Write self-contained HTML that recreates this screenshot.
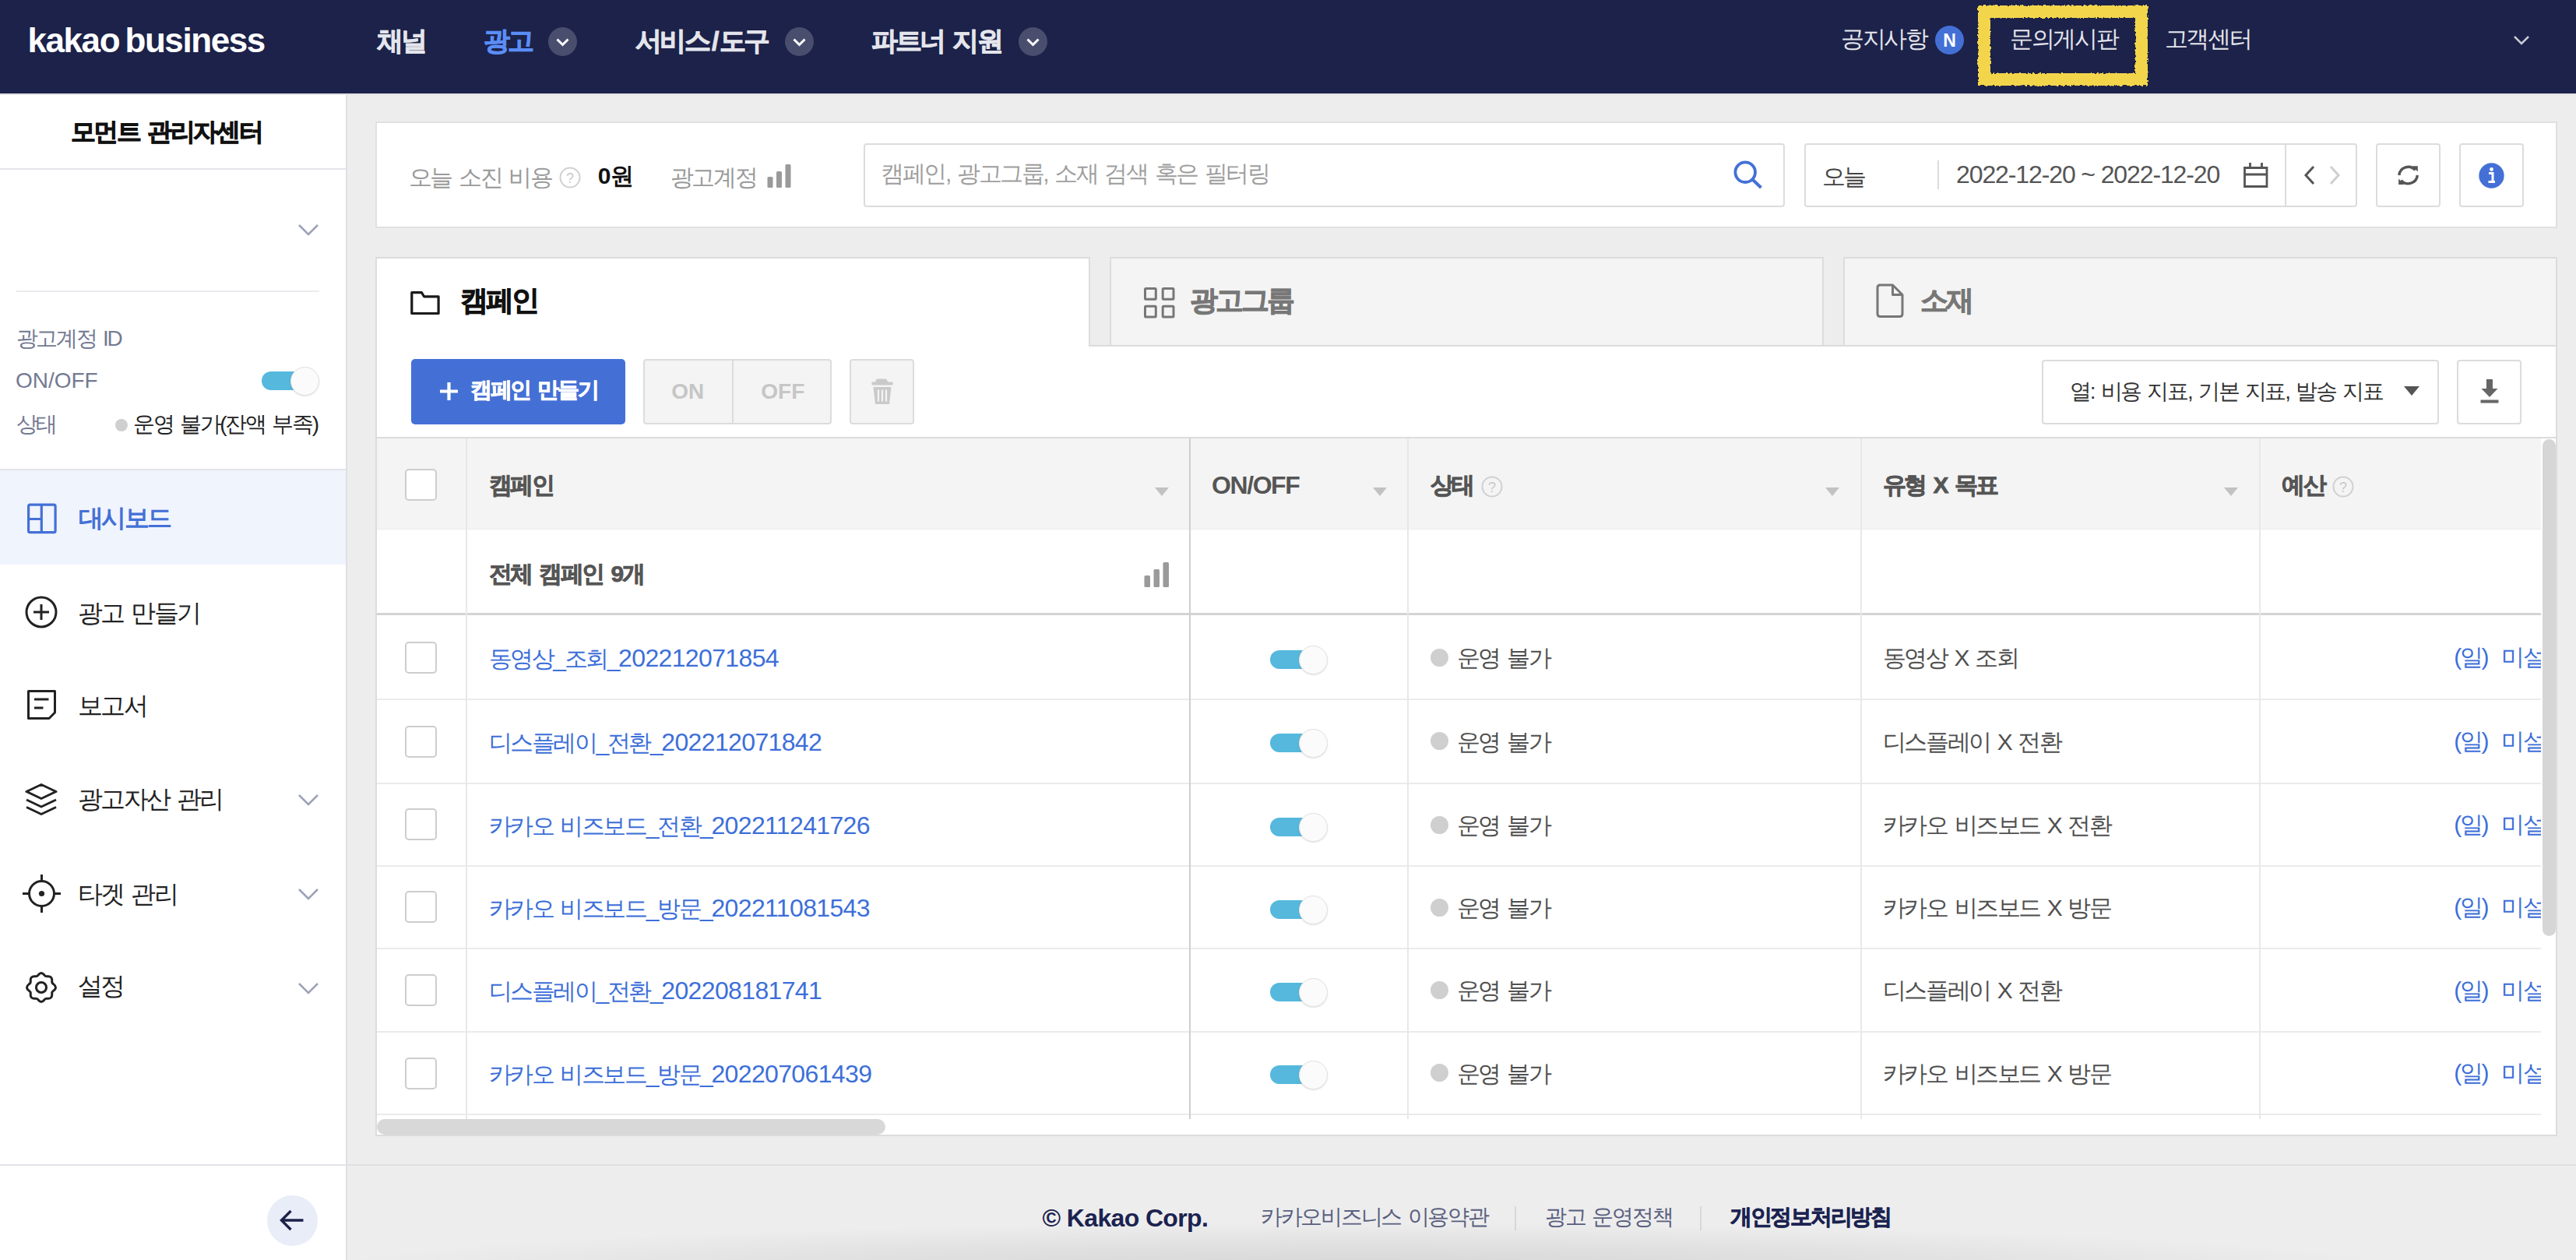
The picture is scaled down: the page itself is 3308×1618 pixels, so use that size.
<!DOCTYPE html>
<html><head><meta charset="utf-8"><title>kakao business</title>
<style>
html,body{margin:0;padding:0;}
body{width:3308px;height:1618px;overflow:hidden;position:relative;background:#ededed;font-family:'Liberation Sans', sans-serif;}
body > div, body div{position:absolute;}
.t{white-space:nowrap;}
</style></head><body>
<div style="left:0px;top:0px;width:3308px;height:120px;background:#1c2249"></div>
<div style="left:0px;top:120px;width:444px;height:1498px;background:#fff"></div>
<div style="left:0px;top:120px;width:3308px;height:2px;background:#e2e2e6"></div>
<div style="left:444px;top:120px;width:2px;height:1498px;background:#dfe0e6"></div>
<div class="t" style="left:35.4px;top:29.7px;font-size:44px;line-height:44px;color:#ffffff;font-weight:700;letter-spacing:-0.032em;word-spacing:0.12em;word-spacing:-0.08em">kakao business</div>
<div class="t" style="left:483.6px;top:35.1px;font-size:34px;line-height:34px;color:#e4e5ec;font-weight:700;letter-spacing:-0.08em;word-spacing:0.12em;-webkit-text-stroke:0.85px #e4e5ec;">채널</div>
<div class="t" style="left:621.1px;top:35.1px;font-size:34px;line-height:34px;color:#5b8df6;font-weight:700;letter-spacing:-0.08em;word-spacing:0.12em;-webkit-text-stroke:0.85px #5b8df6;">광고</div>
<svg style="position:absolute;left:704px;top:35px;" width="37" height="37" viewBox="0 0 37 37"><circle cx="18.5" cy="18.5" r="18.5" fill="#4a4e6e"/><path d="M11.5 15.5 L18.5 22.5 L25.5 15.5" fill="none" stroke="#fff" stroke-width="3"/></svg>
<div class="t" style="left:816.1px;top:35.1px;font-size:34px;line-height:34px;color:#e4e5ec;font-weight:700;letter-spacing:-0.08em;word-spacing:0.12em;-webkit-text-stroke:0.85px #e4e5ec;">서비스<span style="letter-spacing:0.02em;margin-left:0.12em">/</span>도구</div>
<svg style="position:absolute;left:1007.5px;top:35px;" width="37" height="37" viewBox="0 0 37 37"><circle cx="18.5" cy="18.5" r="18.5" fill="#4a4e6e"/><path d="M11.5 15.5 L18.5 22.5 L25.5 15.5" fill="none" stroke="#fff" stroke-width="3"/></svg>
<div class="t" style="left:1118.6px;top:35.1px;font-size:34px;line-height:34px;color:#e4e5ec;font-weight:700;letter-spacing:-0.08em;word-spacing:0.12em;-webkit-text-stroke:0.85px #e4e5ec;">파트너 지원</div>
<svg style="position:absolute;left:1308px;top:35px;" width="37" height="37" viewBox="0 0 37 37"><circle cx="18.5" cy="18.5" r="18.5" fill="#4a4e6e"/><path d="M11.5 15.5 L18.5 22.5 L25.5 15.5" fill="none" stroke="#fff" stroke-width="3"/></svg>
<div class="t" style="left:2364.3px;top:35.4px;font-size:30px;line-height:30px;color:#e4e5ec;font-weight:400;letter-spacing:-0.08em;word-spacing:0.1em;">공지사항</div>
<svg style="position:absolute;left:2484.5px;top:32.5px;" width="37" height="37" viewBox="0 0 37 37"><circle cx="18.5" cy="18.5" r="18.5" fill="#4470d6"/><text x="18.5" y="26.5" text-anchor="middle" font-family="Liberation Sans" font-weight="700" font-size="23" fill="#fff">N</text></svg>
<div class="t" style="left:2581.3px;top:35.4px;font-size:30px;line-height:30px;color:#e4e5ec;font-weight:400;letter-spacing:-0.08em;word-spacing:0.1em;">문의게시판</div>
<div class="t" style="left:2779.8px;top:35.4px;font-size:30px;line-height:30px;color:#e4e5ec;font-weight:400;letter-spacing:-0.08em;word-spacing:0.1em;">고객센터</div>
<svg style="position:absolute;left:3226px;top:42px;" width="24" height="20" viewBox="0 0 24 20"><path d="M3 5 L12 14 L21 5" fill="none" stroke="#c9cad6" stroke-width="2.5"/></svg>
<svg style="position:absolute;left:2530px;top:0px;" width="240" height="122" viewBox="0 0 240 122"><defs><filter id="rough" x="-10%" y="-10%" width="120%" height="120%"><feTurbulence type="fractalNoise" baseFrequency="0.35" numOctaves="2" seed="3"/><feDisplacementMap in="SourceGraphic" scale="4"/></filter></defs><rect x="18" y="15" width="202" height="87" fill="none" stroke="#f3d54c" stroke-width="16" filter="url(#rough)"/></svg>
<div class="t" style="left:90.7px;top:152.8px;font-size:32px;line-height:32px;color:#111;font-weight:700;letter-spacing:-0.08em;word-spacing:0.12em;-webkit-text-stroke:0.80px #111;">모먼트 관리자센터</div>
<div style="left:0px;top:216px;width:444px;height:2px;background:#e3e4ea"></div>
<svg style="position:absolute;left:382px;top:286px;" width="28" height="18" viewBox="0 0 28 18"><path d="M2 3 L14 15 L26 3" fill="none" stroke="#9ca1b5" stroke-width="2.5"/></svg>
<div style="left:21px;top:373px;width:389px;height:2px;background:#ececf0"></div>
<div class="t" style="left:20.5px;top:420.7px;font-size:28px;line-height:28px;color:#737a93;font-weight:400;letter-spacing:-0.08em;word-spacing:0.1em;">광고계정 ID</div>
<div class="t" style="left:19.9px;top:474.8px;font-size:28px;line-height:28px;color:#737a93;font-weight:400;letter-spacing:0em;word-spacing:0.1em;">ON/OFF</div>
<div style="left:336px;top:477px;width:52px;height:24px;border-radius:12px;background:#55b8dc"></div>
<div style="left:373px;top:471px;width:35px;height:35px;border-radius:50%;background:#fbfbfb;border:1px solid #e2e2e2;box-shadow:0 1px 2px rgba(0,0,0,0.12)"></div>
<div class="t" style="left:20.5px;top:531.0px;font-size:28px;line-height:28px;color:#737a93;font-weight:400;letter-spacing:-0.08em;word-spacing:0.1em;">상태</div>
<div style="left:148px;top:538px;width:16px;height:16px;background:#cfcfcf;border-radius:50%"></div>
<div class="t" style="left:170.9px;top:530.5px;font-size:28px;line-height:28px;color:#222;font-weight:400;letter-spacing:-0.08em;word-spacing:0.1em;">운영 불가(잔액 부족)</div>
<div style="left:0px;top:602px;width:444px;height:2px;background:#e3e4ea"></div>
<div style="left:0px;top:604px;width:444px;height:121px;background:#f0f4fd"></div>
<svg style="position:absolute;left:33px;top:645px;" width="41" height="41" viewBox="0 0 41 41"><rect x="3.6" y="3.2" width="34.5" height="35.5" rx="2" fill="none" stroke="#4470d6" stroke-width="3.2"/><path d="M20.3 3.2 V38.7 M3.6 21.5 H20.3" stroke="#4470d6" stroke-width="3.2"/></svg>
<div class="t" style="left:100.7px;top:649.4px;font-size:32px;line-height:32px;color:#4470d6;font-weight:600;letter-spacing:-0.08em;word-spacing:0.12em;">대시보드</div>
<svg style="position:absolute;left:31px;top:764px;" width="44" height="44" viewBox="0 0 44 44"><circle cx="22" cy="22" r="19" fill="none" stroke="#222" stroke-width="3"/><path d="M22 12 V32 M12 22 H32" stroke="#222" stroke-width="3"/></svg>
<div class="t" style="left:99.7px;top:770.8px;font-size:32px;line-height:32px;color:#222;font-weight:400;letter-spacing:-0.08em;word-spacing:0.1em;">광고 만들기</div>
<svg style="position:absolute;left:33px;top:884px;" width="42" height="44" viewBox="0 0 42 44"><path d="M3.5 3.5 H37.5 V31 L30 38.5 H3.5 Z" fill="none" stroke="#222" stroke-width="3" stroke-linejoin="round"/><path d="M11 14 H29.5 M11 25 H22.5" stroke="#222" stroke-width="3"/></svg>
<div class="t" style="left:99.7px;top:890.3px;font-size:32px;line-height:32px;color:#222;font-weight:400;letter-spacing:-0.08em;word-spacing:0.1em;">보고서</div>
<svg style="position:absolute;left:30px;top:1004px;" width="46" height="46" viewBox="0 0 46 46"><path d="M23 3.5 L42 12.5 L23 21.5 L4 12.5 Z" fill="none" stroke="#222" stroke-width="3" stroke-linejoin="round"/><path d="M4 23 L23 32 L42 23 M4 32.5 L23 41.5 L42 32.5" fill="none" stroke="#222" stroke-width="3" stroke-linejoin="round"/></svg>
<div class="t" style="left:99.7px;top:1009.8px;font-size:32px;line-height:32px;color:#222;font-weight:400;letter-spacing:-0.08em;word-spacing:0.1em;">광고자산 관리</div>
<svg style="position:absolute;left:382px;top:1018px;" width="28" height="18" viewBox="0 0 28 18"><path d="M2 3 L14 15 L26 3" fill="none" stroke="#9ca1b5" stroke-width="2.5"/></svg>
<svg style="position:absolute;left:28px;top:1122px;" width="51" height="51" viewBox="0 0 51 51"><circle cx="25.5" cy="25.5" r="16" fill="none" stroke="#222" stroke-width="3"/><circle cx="25.5" cy="25.5" r="3.6" fill="#222"/><path d="M25.5 1 V9.5 M25.5 41.5 V50 M1 25.5 H9.5 M41.5 25.5 H50" stroke="#222" stroke-width="3"/></svg>
<div class="t" style="left:99.7px;top:1131.8px;font-size:32px;line-height:32px;color:#222;font-weight:400;letter-spacing:-0.08em;word-spacing:0.1em;">타겟 관리</div>
<svg style="position:absolute;left:382px;top:1139px;" width="28" height="18" viewBox="0 0 28 18"><path d="M2 3 L14 15 L26 3" fill="none" stroke="#9ca1b5" stroke-width="2.5"/></svg>
<svg style="position:absolute;left:32px;top:1247px;" width="42" height="42" viewBox="0 0 42 42"><path d="M21 2.5 C24 2.5 24.5 5.5 26.5 6.5 C28.5 7.5 31 5.5 33.5 8 C36 10.5 34 13 35 15 C36 17 39.5 17.5 39.5 21 C39.5 24.5 36 25 35 27 C34 29 36 31.5 33.5 34 C31 36.5 28.5 34.5 26.5 35.5 C24.5 36.5 24 39.5 21 39.5 C18 39.5 17.5 36.5 15.5 35.5 C13.5 34.5 11 36.5 8.5 34 C6 31.5 8 29 7 27 C6 25 2.5 24.5 2.5 21 C2.5 17.5 6 17 7 15 C8 13 6 10.5 8.5 8 C11 5.5 13.5 7.5 15.5 6.5 C17.5 5.5 18 2.5 21 2.5 Z" fill="none" stroke="#222" stroke-width="3" stroke-linejoin="round"/><circle cx="21" cy="21" r="6.5" fill="none" stroke="#222" stroke-width="3"/></svg>
<div class="t" style="left:99.7px;top:1250.3px;font-size:32px;line-height:32px;color:#222;font-weight:400;letter-spacing:-0.08em;word-spacing:0.1em;">설정</div>
<svg style="position:absolute;left:382px;top:1260px;" width="28" height="18" viewBox="0 0 28 18"><path d="M2 3 L14 15 L26 3" fill="none" stroke="#9ca1b5" stroke-width="2.5"/></svg>
<div style="left:0px;top:1495px;width:444px;height:2px;background:#e3e4ea"></div>
<svg style="position:absolute;left:343px;top:1535px;" width="65" height="65" viewBox="0 0 65 65"><circle cx="32.5" cy="32.5" r="32.5" fill="#e9edf8"/><path d="M19.5 32 H46.5 M30.5 20 L18.5 32 L30.5 44" fill="none" stroke="#1c2249" stroke-width="3.4"/></svg>
<div style="left:482px;top:156px;width:2802px;height:137px;background:#fff;border:2px solid #e0e0e0;box-sizing:border-box"></div>
<div class="t" style="left:524.8px;top:212.9px;font-size:30px;line-height:30px;color:#9a9a9a;font-weight:400;letter-spacing:-0.08em;word-spacing:0.1em;">오늘 소진 비용</div>
<svg style="position:absolute;left:717px;top:213px;" width="30" height="30" viewBox="0 0 30 30"><circle cx="15" cy="15" r="12.5" fill="none" stroke="#d0d0d0" stroke-width="2"/><text x="15" y="21.5" text-anchor="middle" font-family="Liberation Sans" font-size="18" fill="#c8c8c8">?</text></svg>
<div class="t" style="left:767.7px;top:210.5px;font-size:30px;line-height:30px;color:#111;font-weight:700;letter-spacing:0em;word-spacing:0.12em;">0<span style="letter-spacing:-0.08em">원</span></div>
<div class="t" style="left:860.8px;top:212.9px;font-size:30px;line-height:30px;color:#9a9a9a;font-weight:400;letter-spacing:-0.08em;word-spacing:0.1em;">광고계정</div>
<svg style="position:absolute;left:985px;top:210px;" width="32" height="32" viewBox="0 0 32 32"><rect x="0.5" y="17" width="7" height="14" rx="1.5" fill="#9a9a9a"/><rect x="12" y="10" width="7" height="21" rx="1.5" fill="#9a9a9a"/><rect x="23.5" y="1" width="7" height="30" rx="1.5" fill="#9a9a9a"/></svg>
<div style="left:1109px;top:184px;width:1183px;height:82px;background:#fff;border:2px solid #dcdcdc;border-radius:4px;box-sizing:border-box"></div>
<div class="t" style="left:1131.3px;top:207.9px;font-size:30px;line-height:30px;color:#9f9f9f;font-weight:400;letter-spacing:-0.08em;word-spacing:0.1em;">캠페인, 광고그룹, 소재 검색 혹은 필터링</div>
<svg style="position:absolute;left:2222px;top:204px;" width="44" height="42" viewBox="0 0 44 42"><circle cx="19.2" cy="17.2" r="12.8" fill="none" stroke="#4470d6" stroke-width="3.8"/><path d="M28.5 26.5 L39.5 37" stroke="#4470d6" stroke-width="4" stroke-linecap="butt"/></svg>
<div style="left:2317px;top:184px;width:710px;height:82px;background:#fff;border:2px solid #dcdcdc;border-radius:4px;box-sizing:border-box"></div>
<div class="t" style="left:2339.8px;top:211.9px;font-size:30px;line-height:30px;color:#444;font-weight:400;letter-spacing:-0.08em;word-spacing:0.1em;">오늘</div>
<div style="left:2488px;top:206px;width:2px;height:37px;background:#dcdcdc"></div>
<div class="t" style="left:2512.1px;top:208.2px;font-size:32px;line-height:32px;color:#555;font-weight:400;letter-spacing:-0.035em;word-spacing:0.1em;word-spacing:0">2022-12-20 ~ 2022-12-20</div>
<svg style="position:absolute;left:2880px;top:208px;" width="34" height="34" viewBox="0 0 34 34"><path d="M2.5 7.5 H31 V31.5 H2.5 Z M2.5 16 H31 M9.5 1 V7.5 M24.5 1 V7.5" fill="none" stroke="#555" stroke-width="2.8"/></svg>
<div style="left:2934px;top:186px;width:2px;height:78px;background:#dcdcdc"></div>
<svg style="position:absolute;left:2955px;top:211px;" width="22" height="28" viewBox="0 0 22 28"><path d="M16 3 L6 14 L16 25" fill="none" stroke="#555" stroke-width="3"/></svg>
<svg style="position:absolute;left:2988px;top:211px;" width="22" height="28" viewBox="0 0 22 28"><path d="M5 3 L15 14 L5 25" fill="none" stroke="#cfcfcf" stroke-width="3"/></svg>
<div style="left:3051px;top:184px;width:83px;height:82px;background:#fff;border:2px solid #dcdcdc;border-radius:4px;box-sizing:border-box"></div>
<svg style="position:absolute;left:3076px;top:208px;" width="34" height="34" viewBox="0 0 34 34"><path d="M4.8 17 A11.8 11.8 0 0 1 25.5 10.5" fill="none" stroke="#555" stroke-width="3.4"/><path d="M28.3 17 A11.8 11.8 0 0 1 7.5 23.5" fill="none" stroke="#555" stroke-width="3.4"/><path d="M21.5 5.2 H28.8 V12.6 Z" fill="#555"/><path d="M4.2 21.6 V29 H11.6 Z" fill="#555"/></svg>
<div style="left:3158px;top:184px;width:83px;height:82px;background:#fff;border:2px solid #dcdcdc;border-radius:4px;box-sizing:border-box"></div>
<svg style="position:absolute;left:3183px;top:209px;" width="33" height="33" viewBox="0 0 33 33"><circle cx="16.5" cy="16.5" r="16.2" fill="#4470d6"/><circle cx="16.5" cy="8.5" r="2.4" fill="#fff"/><path d="M13 13.5 H18 V24.5 M12.5 24.5 H21" fill="none" stroke="#fff" stroke-width="3"/></svg>
<div style="left:482px;top:330px;width:918px;height:115px;background:#fff;border:2px solid #dcdcdc;border-bottom:none;box-sizing:border-box"></div>
<div style="left:1425px;top:330px;width:917px;height:114px;background:#f4f4f4;border:2px solid #dcdcdc;border-bottom:none;box-sizing:border-box"></div>
<div style="left:2367px;top:330px;width:917px;height:114px;background:#f4f4f4;border:2px solid #dcdcdc;border-bottom:none;box-sizing:border-box"></div>
<div style="left:1398px;top:443px;width:1886px;height:2px;background:#dcdcdc"></div>
<svg style="position:absolute;left:524px;top:372px;" width="44" height="36" viewBox="0 0 44 36"><path d="M4.8 3.7 H17.5 L20.5 8.8 H39.1 V30.5 H4.8 Z" fill="none" stroke="#1a1a1a" stroke-width="3.2" stroke-linejoin="round"/></svg>
<div class="t" style="left:591.1px;top:367.5px;font-size:36px;line-height:36px;color:#111;font-weight:700;letter-spacing:-0.08em;word-spacing:0.12em;-webkit-text-stroke:0.90px #111;">캠페인</div>
<svg style="position:absolute;left:1469px;top:369px;" width="41" height="41" viewBox="0 0 41 41"><rect x="1.5" y="1.5" width="13.8" height="13.8" rx="1" fill="none" stroke="#777" stroke-width="3"/><rect x="24.2" y="1.5" width="13.8" height="13.8" rx="1" fill="none" stroke="#777" stroke-width="3"/><rect x="1.5" y="24.2" width="13.8" height="13.8" rx="1" fill="none" stroke="#777" stroke-width="3"/><rect x="24.2" y="24.2" width="13.8" height="13.8" rx="1" fill="none" stroke="#777" stroke-width="3"/></svg>
<div class="t" style="left:1528.1px;top:367.5px;font-size:36px;line-height:36px;color:#777;font-weight:700;letter-spacing:-0.08em;word-spacing:0.12em;-webkit-text-stroke:0.90px #777;">광고그룹</div>
<svg style="position:absolute;left:2409px;top:363px;" width="40" height="47" viewBox="0 0 40 47"><path d="M4 3 H21.5 L34 15.5 V40 Q34 43.5 30.5 43.5 H5.5 Q2 43.5 2 40 V6.5 Q2 3 5.5 3 Z" fill="none" stroke="#777" stroke-width="3" stroke-linejoin="round"/><path d="M21.5 3 V15.5 H34" fill="none" stroke="#777" stroke-width="3" stroke-linejoin="round"/></svg>
<div class="t" style="left:2465.6px;top:367.5px;font-size:36px;line-height:36px;color:#777;font-weight:700;letter-spacing:-0.08em;word-spacing:0.12em;-webkit-text-stroke:0.90px #777;">소재</div>
<div style="left:482px;top:445px;width:2802px;height:1014px;background:#fff;border:2px solid #dcdcdc;border-top:none;box-sizing:border-box"></div>
<div style="left:528px;top:461px;width:275px;height:84px;background:#4470d6;border-radius:5px"></div>
<svg style="position:absolute;left:563px;top:489px;" width="27" height="27" viewBox="0 0 27 27"><path d="M13.5 2 V25 M2 13.5 H25" stroke="#fff" stroke-width="4.2"/></svg>
<div class="t" style="left:603.9px;top:487.0px;font-size:28px;line-height:28px;color:#fff;font-weight:700;letter-spacing:-0.08em;word-spacing:0.12em;-webkit-text-stroke:0.70px #fff;">캠페인 만들기</div>
<div style="left:826px;top:461px;width:242px;height:84px;background:#f4f4f4;border:2px solid #dcdcdc;border-radius:4px;box-sizing:border-box"></div>
<div style="left:940px;top:463px;width:2px;height:80px;background:#dcdcdc"></div>
<div class="t" style="left:862.3px;top:488.8px;font-size:28px;line-height:28px;color:#c6c6c6;font-weight:700;letter-spacing:0em;word-spacing:0.12em;">ON</div>
<div class="t" style="left:977.3px;top:488.8px;font-size:28px;line-height:28px;color:#c6c6c6;font-weight:700;letter-spacing:0em;word-spacing:0.12em;">OFF</div>
<div style="left:1091px;top:461px;width:83px;height:84px;background:#f4f4f4;border:2px solid #dcdcdc;border-radius:4px;box-sizing:border-box"></div>
<svg style="position:absolute;left:1117px;top:485px;" width="32" height="36" viewBox="0 0 32 36"><path d="M8 3.5 Q8 1.5 10 1.5 H20 Q22 1.5 22 3.5 L23.5 5.5 H29.5 V9.5 H2.5 V5.5 H6.5 Z" fill="#cacaca"/><path d="M4.5 12 H27.5 L25 34 H7 Z" fill="#cacaca"/><path d="M11 15.5 V30.5 M16 15.5 V30.5 M21 15.5 V30.5" stroke="#f4f4f4" stroke-width="2.2"/></svg>
<div style="left:2622px;top:462px;width:510px;height:83px;background:#fff;border:2px solid #dcdcdc;border-radius:4px;box-sizing:border-box"></div>
<div class="t" style="left:2657.9px;top:489.0px;font-size:28px;line-height:28px;color:#333;font-weight:400;letter-spacing:-0.08em;word-spacing:0.1em;">열: 비용 지표, 기본 지표, 발송 지표</div>
<svg style="position:absolute;left:3086px;top:494px;" width="22" height="16" viewBox="0 0 22 16"><path d="M1 2 H21 L11 14 Z" fill="#555"/></svg>
<div style="left:3155px;top:462px;width:83px;height:83px;background:#fff;border:2px solid #dcdcdc;border-radius:4px;box-sizing:border-box"></div>
<svg style="position:absolute;left:3183px;top:485px;" width="28" height="34" viewBox="0 0 28 34"><path d="M10 2 H18 V14 H24.5 L14 25 L3.5 14 H10 Z" fill="#666"/><rect x="2.5" y="28.5" width="23" height="4" fill="#666"/></svg>
<div style="left:484px;top:561px;width:2798px;height:2px;background:#dcdcdc"></div>
<div style="left:484px;top:563px;width:2779px;height:117px;background:#f4f4f4"></div>
<div style="left:484px;top:679px;width:2779px;height:1px;background:#ececec"></div>
<div style="left:484px;top:787px;width:2779px;height:3px;background:#d4d4d4"></div>
<div style="left:484px;top:897px;width:2779px;height:2px;background:#ebebeb"></div>
<div style="left:484px;top:1005px;width:2779px;height:2px;background:#ebebeb"></div>
<div style="left:484px;top:1111px;width:2779px;height:2px;background:#ebebeb"></div>
<div style="left:484px;top:1217px;width:2779px;height:2px;background:#ebebeb"></div>
<div style="left:484px;top:1324px;width:2779px;height:2px;background:#ebebeb"></div>
<div style="left:484px;top:1430px;width:2779px;height:2px;background:#ebebeb"></div>
<div style="left:598px;top:563px;width:2px;height:874px;background:#e8e8e8"></div>
<div style="left:1527px;top:563px;width:2px;height:874px;background:#cfcfcf"></div>
<div style="left:1807px;top:563px;width:2px;height:874px;background:#e8e8e8"></div>
<div style="left:2389px;top:563px;width:2px;height:874px;background:#e8e8e8"></div>
<div style="left:2901px;top:563px;width:2px;height:874px;background:#e8e8e8"></div>
<div style="left:520px;top:602px;width:41px;height:41px;background:#fff;border:2px solid #cdcdcd;border-radius:5px;box-sizing:border-box"></div>
<div class="t" style="left:627.5px;top:607.9px;font-size:30px;line-height:30px;color:#555;font-weight:700;letter-spacing:-0.08em;word-spacing:0.12em;-webkit-text-stroke:0.75px #555;">캠페인</div>
<svg style="position:absolute;left:1482.5px;top:626px;" width="18" height="12" viewBox="0 0 18 12"><path d="M0 0 H18 L9 11 Z" fill="#c2c2c2"/></svg>
<svg style="position:absolute;left:1762.5px;top:626px;" width="18" height="12" viewBox="0 0 18 12"><path d="M0 0 H18 L9 11 Z" fill="#c2c2c2"/></svg>
<svg style="position:absolute;left:2344px;top:626px;" width="18" height="12" viewBox="0 0 18 12"><path d="M0 0 H18 L9 11 Z" fill="#c2c2c2"/></svg>
<svg style="position:absolute;left:2856px;top:626px;" width="18" height="12" viewBox="0 0 18 12"><path d="M0 0 H18 L9 11 Z" fill="#c2c2c2"/></svg>
<div class="t" style="left:1556.1px;top:607.2px;font-size:32px;line-height:32px;color:#555;font-weight:700;letter-spacing:-0.045em;word-spacing:0.12em;">ON/OFF</div>
<div class="t" style="left:1836.8px;top:607.9px;font-size:30px;line-height:30px;color:#555;font-weight:700;letter-spacing:-0.08em;word-spacing:0.12em;-webkit-text-stroke:0.75px #555;">상태</div>
<svg style="position:absolute;left:1902px;top:611px;" width="28" height="28" viewBox="0 0 28 28"><circle cx="14" cy="14" r="12.5" fill="none" stroke="#d0d0d0" stroke-width="2"/><text x="14" y="20.5" text-anchor="middle" font-family="Liberation Sans" font-size="18" fill="#c8c8c8">?</text></svg>
<div class="t" style="left:2417.8px;top:607.9px;font-size:30px;line-height:30px;color:#555;font-weight:700;letter-spacing:-0.08em;word-spacing:0.12em;-webkit-text-stroke:0.75px #555;">유형 X 목표</div>
<div class="t" style="left:2930.4px;top:607.9px;font-size:30px;line-height:30px;color:#555;font-weight:700;letter-spacing:-0.08em;word-spacing:0.12em;-webkit-text-stroke:0.75px #555;">예산</div>
<svg style="position:absolute;left:2995px;top:611px;" width="28" height="28" viewBox="0 0 28 28"><circle cx="14" cy="14" r="12.5" fill="none" stroke="#d0d0d0" stroke-width="2"/><text x="14" y="20.5" text-anchor="middle" font-family="Liberation Sans" font-size="18" fill="#c8c8c8">?</text></svg>
<div class="t" style="left:627.5px;top:721.6px;font-size:30px;line-height:30px;color:#555;font-weight:700;letter-spacing:-0.08em;word-spacing:0.12em;-webkit-text-stroke:0.75px #555;">전체 캠페인 9개</div>
<svg style="position:absolute;left:1469px;top:721px;" width="33" height="34" viewBox="0 0 33 34"><rect x="0.5" y="18" width="7.5" height="15" rx="1.5" fill="#9a9a9a"/><rect x="12.5" y="10" width="7.5" height="23" rx="1.5" fill="#9a9a9a"/><rect x="24.5" y="1" width="7.5" height="32" rx="1.5" fill="#9a9a9a"/></svg>
<div style="left:520px;top:824px;width:41px;height:41px;background:#fff;border:2px solid #cdcdcd;border-radius:5px;box-sizing:border-box"></div>
<div class="t" style="left:627.5px;top:830.4px;font-size:30px;line-height:30px;color:#3d6fd9;font-weight:400;letter-spacing:-0.08em;word-spacing:0.1em;">동영상_조회_<span style="letter-spacing:-0.02em;font-size:32px">202212071854</span></div>
<div style="left:1631px;top:835px;width:52px;height:24px;border-radius:12px;background:#55b8dc"></div>
<div style="left:1668px;top:829px;width:35px;height:35px;border-radius:50%;background:#fbfbfb;border:1px solid #e2e2e2;box-shadow:0 1px 2px rgba(0,0,0,0.12)"></div>
<div style="left:1837px;top:833px;width:23px;height:23px;background:#cfcfcf;border-radius:50%"></div>
<div class="t" style="left:1870.8px;top:830.4px;font-size:30px;line-height:30px;color:#505050;font-weight:400;letter-spacing:-0.08em;word-spacing:0.1em;">운영 불가</div>
<div class="t" style="left:2417.8px;top:830.4px;font-size:30px;line-height:30px;color:#505050;font-weight:400;letter-spacing:-0.08em;word-spacing:0.1em;">동영상 X 조회</div>
<div style="left:2903px;top:814px;width:360px;height:60px;overflow:hidden"><div class="t" style="left:248.3px;top:14.5px;font-size:30px;line-height:30px;color:#3d6fd9;letter-spacing:-0.08em;word-spacing:0.4em">(일) 미설정</div></div>
<div style="left:520px;top:932px;width:41px;height:41px;background:#fff;border:2px solid #cdcdcd;border-radius:5px;box-sizing:border-box"></div>
<div class="t" style="left:627.5px;top:937.9px;font-size:30px;line-height:30px;color:#3d6fd9;font-weight:400;letter-spacing:-0.08em;word-spacing:0.1em;">디스플레이_전환_<span style="letter-spacing:-0.02em;font-size:32px">202212071842</span></div>
<div style="left:1631px;top:942px;width:52px;height:24px;border-radius:12px;background:#55b8dc"></div>
<div style="left:1668px;top:936px;width:35px;height:35px;border-radius:50%;background:#fbfbfb;border:1px solid #e2e2e2;box-shadow:0 1px 2px rgba(0,0,0,0.12)"></div>
<div style="left:1837px;top:940px;width:23px;height:23px;background:#cfcfcf;border-radius:50%"></div>
<div class="t" style="left:1870.8px;top:937.9px;font-size:30px;line-height:30px;color:#505050;font-weight:400;letter-spacing:-0.08em;word-spacing:0.1em;">운영 불가</div>
<div class="t" style="left:2417.8px;top:937.9px;font-size:30px;line-height:30px;color:#505050;font-weight:400;letter-spacing:-0.08em;word-spacing:0.1em;">디스플레이 X 전환</div>
<div style="left:2903px;top:922px;width:360px;height:60px;overflow:hidden"><div class="t" style="left:248.3px;top:14.5px;font-size:30px;line-height:30px;color:#3d6fd9;letter-spacing:-0.08em;word-spacing:0.4em">(일) 미설정</div></div>
<div style="left:520px;top:1038px;width:41px;height:41px;background:#fff;border:2px solid #cdcdcd;border-radius:5px;box-sizing:border-box"></div>
<div class="t" style="left:627.5px;top:1044.9px;font-size:30px;line-height:30px;color:#3d6fd9;font-weight:400;letter-spacing:-0.08em;word-spacing:0.1em;">카카오 비즈보드_전환_<span style="letter-spacing:-0.02em;font-size:32px">202211241726</span></div>
<div style="left:1631px;top:1050px;width:52px;height:24px;border-radius:12px;background:#55b8dc"></div>
<div style="left:1668px;top:1044px;width:35px;height:35px;border-radius:50%;background:#fbfbfb;border:1px solid #e2e2e2;box-shadow:0 1px 2px rgba(0,0,0,0.12)"></div>
<div style="left:1837px;top:1048px;width:23px;height:23px;background:#cfcfcf;border-radius:50%"></div>
<div class="t" style="left:1870.8px;top:1044.9px;font-size:30px;line-height:30px;color:#505050;font-weight:400;letter-spacing:-0.08em;word-spacing:0.1em;">운영 불가</div>
<div class="t" style="left:2417.8px;top:1044.9px;font-size:30px;line-height:30px;color:#505050;font-weight:400;letter-spacing:-0.08em;word-spacing:0.1em;">카카오 비즈보드 X 전환</div>
<div style="left:2903px;top:1029px;width:360px;height:60px;overflow:hidden"><div class="t" style="left:248.3px;top:14.5px;font-size:30px;line-height:30px;color:#3d6fd9;letter-spacing:-0.08em;word-spacing:0.4em">(일) 미설정</div></div>
<div style="left:520px;top:1144px;width:41px;height:41px;background:#fff;border:2px solid #cdcdcd;border-radius:5px;box-sizing:border-box"></div>
<div class="t" style="left:627.5px;top:1150.9px;font-size:30px;line-height:30px;color:#3d6fd9;font-weight:400;letter-spacing:-0.08em;word-spacing:0.1em;">카카오 비즈보드_방문_<span style="letter-spacing:-0.02em;font-size:32px">202211081543</span></div>
<div style="left:1631px;top:1156px;width:52px;height:24px;border-radius:12px;background:#55b8dc"></div>
<div style="left:1668px;top:1150px;width:35px;height:35px;border-radius:50%;background:#fbfbfb;border:1px solid #e2e2e2;box-shadow:0 1px 2px rgba(0,0,0,0.12)"></div>
<div style="left:1837px;top:1154px;width:23px;height:23px;background:#cfcfcf;border-radius:50%"></div>
<div class="t" style="left:1870.8px;top:1150.9px;font-size:30px;line-height:30px;color:#505050;font-weight:400;letter-spacing:-0.08em;word-spacing:0.1em;">운영 불가</div>
<div class="t" style="left:2417.8px;top:1150.9px;font-size:30px;line-height:30px;color:#505050;font-weight:400;letter-spacing:-0.08em;word-spacing:0.1em;">카카오 비즈보드 X 방문</div>
<div style="left:2903px;top:1135px;width:360px;height:60px;overflow:hidden"><div class="t" style="left:248.3px;top:14.5px;font-size:30px;line-height:30px;color:#3d6fd9;letter-spacing:-0.08em;word-spacing:0.4em">(일) 미설정</div></div>
<div style="left:520px;top:1251px;width:41px;height:41px;background:#fff;border:2px solid #cdcdcd;border-radius:5px;box-sizing:border-box"></div>
<div class="t" style="left:627.5px;top:1257.4px;font-size:30px;line-height:30px;color:#3d6fd9;font-weight:400;letter-spacing:-0.08em;word-spacing:0.1em;">디스플레이_전환_<span style="letter-spacing:-0.02em;font-size:32px">202208181741</span></div>
<div style="left:1631px;top:1262px;width:52px;height:24px;border-radius:12px;background:#55b8dc"></div>
<div style="left:1668px;top:1256px;width:35px;height:35px;border-radius:50%;background:#fbfbfb;border:1px solid #e2e2e2;box-shadow:0 1px 2px rgba(0,0,0,0.12)"></div>
<div style="left:1837px;top:1260px;width:23px;height:23px;background:#cfcfcf;border-radius:50%"></div>
<div class="t" style="left:1870.8px;top:1257.4px;font-size:30px;line-height:30px;color:#505050;font-weight:400;letter-spacing:-0.08em;word-spacing:0.1em;">운영 불가</div>
<div class="t" style="left:2417.8px;top:1257.4px;font-size:30px;line-height:30px;color:#505050;font-weight:400;letter-spacing:-0.08em;word-spacing:0.1em;">디스플레이 X 전환</div>
<div style="left:2903px;top:1242px;width:360px;height:60px;overflow:hidden"><div class="t" style="left:248.3px;top:14.5px;font-size:30px;line-height:30px;color:#3d6fd9;letter-spacing:-0.08em;word-spacing:0.4em">(일) 미설정</div></div>
<div style="left:520px;top:1358px;width:41px;height:41px;background:#fff;border:2px solid #cdcdcd;border-radius:5px;box-sizing:border-box"></div>
<div class="t" style="left:627.5px;top:1363.9px;font-size:30px;line-height:30px;color:#3d6fd9;font-weight:400;letter-spacing:-0.08em;word-spacing:0.1em;">카카오 비즈보드_방문_<span style="letter-spacing:-0.02em;font-size:32px">202207061439</span></div>
<div style="left:1631px;top:1368px;width:52px;height:24px;border-radius:12px;background:#55b8dc"></div>
<div style="left:1668px;top:1362px;width:35px;height:35px;border-radius:50%;background:#fbfbfb;border:1px solid #e2e2e2;box-shadow:0 1px 2px rgba(0,0,0,0.12)"></div>
<div style="left:1837px;top:1366px;width:23px;height:23px;background:#cfcfcf;border-radius:50%"></div>
<div class="t" style="left:1870.8px;top:1363.9px;font-size:30px;line-height:30px;color:#505050;font-weight:400;letter-spacing:-0.08em;word-spacing:0.1em;">운영 불가</div>
<div class="t" style="left:2417.8px;top:1363.9px;font-size:30px;line-height:30px;color:#505050;font-weight:400;letter-spacing:-0.08em;word-spacing:0.1em;">카카오 비즈보드 X 방문</div>
<div style="left:2903px;top:1348px;width:360px;height:60px;overflow:hidden"><div class="t" style="left:248.3px;top:14.5px;font-size:30px;line-height:30px;color:#3d6fd9;letter-spacing:-0.08em;word-spacing:0.4em">(일) 미설정</div></div>
<div style="left:3265px;top:564px;width:17px;height:638px;background:#d6d6d6;border-radius:9px"></div>
<div style="left:484px;top:1437px;width:653px;height:20px;background:#d8d8d8;border-radius:10px"></div>
<div style="left:445px;top:1495px;width:2863px;height:2px;background:#e0e0e0"></div>
<div class="t" style="left:1338.6px;top:1547.7px;font-size:32px;line-height:32px;color:#1b2350;font-weight:700;letter-spacing:-0.02em;word-spacing:0.12em;word-spacing:0">© Kakao Corp.</div>
<div class="t" style="left:1618.9px;top:1549.0px;font-size:28px;line-height:28px;color:#5a6080;font-weight:400;letter-spacing:-0.08em;word-spacing:0.1em;">카카오비즈니스 이용약관</div>
<div style="left:1945px;top:1549px;width:2px;height:31px;background:#d8d8d8"></div>
<div class="t" style="left:1984.4px;top:1549.0px;font-size:28px;line-height:28px;color:#5a6080;font-weight:400;letter-spacing:-0.08em;word-spacing:0.1em;">광고 운영정책</div>
<div style="left:2183px;top:1549px;width:2px;height:31px;background:#d8d8d8"></div>
<div class="t" style="left:2221.9px;top:1549.0px;font-size:28px;line-height:28px;color:#1b2350;font-weight:700;letter-spacing:-0.08em;word-spacing:0.12em;-webkit-text-stroke:0.70px #1b2350;">개인정보처리방침</div>
<div style="left:445px;top:1560px;width:2863px;height:58px;background:radial-gradient(ellipse 1350px 60px at 1305px 70px, rgba(0,0,0,0.10), rgba(0,0,0,0.05) 55%, rgba(0,0,0,0) 100%)"></div>
</body></html>
